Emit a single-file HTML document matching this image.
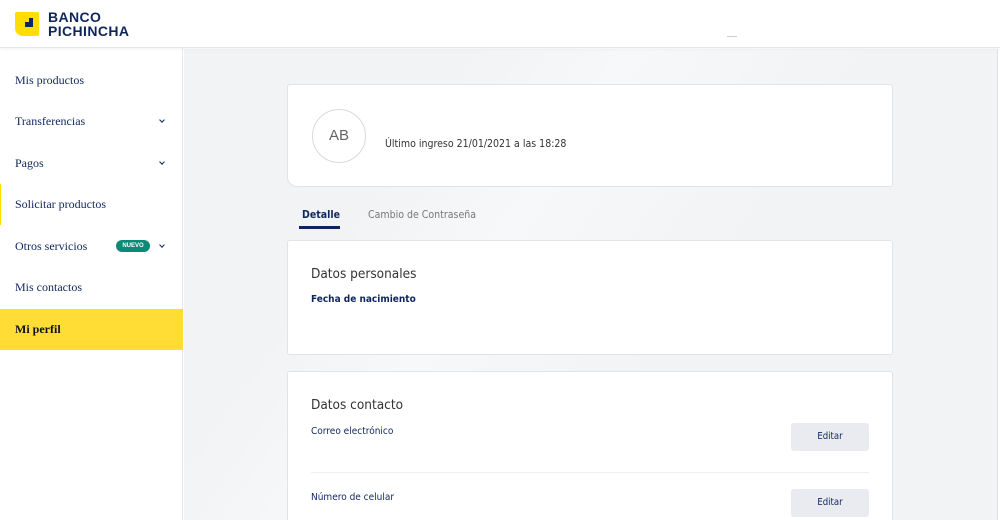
<!DOCTYPE html>
<html><head><meta charset="utf-8"><style>
*{box-sizing:border-box;margin:0;padding:0}
html,body{width:1000px;height:520px;overflow:hidden}
body{background:#fff;font-family:"Liberation Sans",sans-serif;position:relative}
.top{position:absolute;left:0;top:0;width:1000px;height:48px;background:#fff;border-bottom:1px solid #e4e6ea;box-shadow:0 1px 3px rgba(0,0,0,.06);z-index:3}
.logo{position:absolute;left:15px;top:12px;width:24px;height:24px;background:#ffdd00;border-radius:2px 2px 2px 8px}
.logo i{position:absolute;left:10px;top:6px;width:8px;height:9px;background:#0f265c}
.logo b{position:absolute;left:10px;top:6px;width:4px;height:4px;background:#ffdd00}
.brand{position:absolute;left:48px;top:10px;font-weight:bold;font-size:14px;line-height:14px;color:#0f265c;letter-spacing:.4px}
.side{position:absolute;left:0;top:48px;width:183px;height:472px;background:#fff;border-right:1px solid #e6e8eb}
.item{position:absolute;left:0;width:183px;height:41px;font-family:"Liberation Serif",serif;font-size:12px;color:#0f265c;padding-left:15px;line-height:41px}
.chev{position:absolute;left:160px;top:17px;width:4px;height:4px;border-right:1.6px solid #0f265c;border-bottom:1.6px solid #0f265c;transform:rotate(45deg)}
.nuevo{position:absolute;left:116px;top:14px;width:34px;height:12px;border-radius:6px;background:#0d8a76;color:#fff;font-family:"Liberation Sans",sans-serif;font-size:6px;font-weight:bold;line-height:12px;text-align:center}
.main{position:absolute;left:184px;top:49px;width:813px;height:471px;background:#f1f3f5;overflow:hidden}
.band{position:absolute;left:80px;top:-50px;width:400px;height:700px;background:linear-gradient(90deg,rgba(255,255,255,0),#f7f8f9 40%,rgba(255,255,255,0));transform:skewX(-35deg)}
.rb{position:absolute;left:997px;top:49px;width:3px;height:471px;background:#fff;border-left:1px solid #e0e2e6}
.card{position:absolute;left:287px;width:606px;background:#fff;border:1px solid #e1e3e6;border-radius:3px}
.av{position:absolute;left:24px;top:24px;width:54px;height:54px;border:1px solid #d8dadd;border-radius:50%;font-size:15px;color:#666;text-align:center;line-height:52px}
.t{position:absolute;font-family:"DejaVu Sans Condensed","Liberation Sans",sans-serif;color:#0f265c}
.btn{position:absolute;left:503px;width:78px;height:28px;background:#e9ebf0;border-radius:3px;font-size:9.5px;color:#0f265c;text-align:center;line-height:28px;font-family:"DejaVu Sans Condensed",sans-serif}
</style></head><body>
<div class="top">
<div class="logo"><i></i><b></b></div>
<div class="brand">BANCO<br>PICHINCHA</div>
<div style="position:absolute;left:727px;top:36px;width:10px;height:1px;background:#ccc"></div>
</div>
<div class="side">
<div class="item" style="top:12px">Mis productos</div>
<div class="item" style="top:53px">Transferencias<span class="chev"></span></div>
<div class="item" style="top:95px">Pagos<span class="chev"></span></div>
<div class="item" style="top:136px;border-left:1px solid #ffdd00;padding-left:14px">Solicitar productos</div>
<div class="item" style="top:178px">Otros servicios<span class="nuevo">NUEVO</span><span class="chev"></span></div>
<div class="item" style="top:219px">Mis contactos</div>
<div class="item" style="top:261px;background:#ffdd35;font-weight:bold;color:#111">Mi perfil</div>
</div>
<div class="main"><div class="band"></div></div>
<div class="rb"></div>

<div class="card" style="top:84px;height:103px;border-radius:3px 3px 3px 10px">
<div class="av">AB</div>
<div class="t" style="left:97px;top:53px;font-size:10.5px;color:#333">Último ingreso 21/01/2021 a las 18:28</div>
</div>

<div class="t" style="left:302px;top:209px;font-size:10.5px;font-weight:bold">Detalle</div>
<div style="position:absolute;left:299px;top:226px;width:41px;height:3px;background:#0f265c"></div>
<div class="t" style="left:368px;top:209px;font-size:10.5px;color:#777">Cambio de Contraseña</div>

<div class="card" style="top:240px;height:115px">
<div class="t" style="left:23px;top:25px;font-size:13.5px;color:#333">Datos personales</div>
<div class="t" style="left:23px;top:53px;font-size:10px;font-weight:bold">Fecha de nacimiento</div>
</div>

<div class="card" style="top:371px;height:149px;border-bottom:none;border-radius:3px 3px 0 0">
<div class="t" style="left:23px;top:25px;font-size:13.5px;color:#333">Datos contacto</div>
<div class="t" style="left:23px;top:54px;font-size:10px">Correo electrónico</div>
<div class="btn" style="top:51px">Editar</div>
<div style="position:absolute;left:23px;top:100px;width:558px;height:1px;background:#eef0f2"></div>
<div class="t" style="left:23px;top:120px;font-size:10px">Número de celular</div>
<div class="btn" style="top:117px">Editar</div>
</div>
</body></html>
